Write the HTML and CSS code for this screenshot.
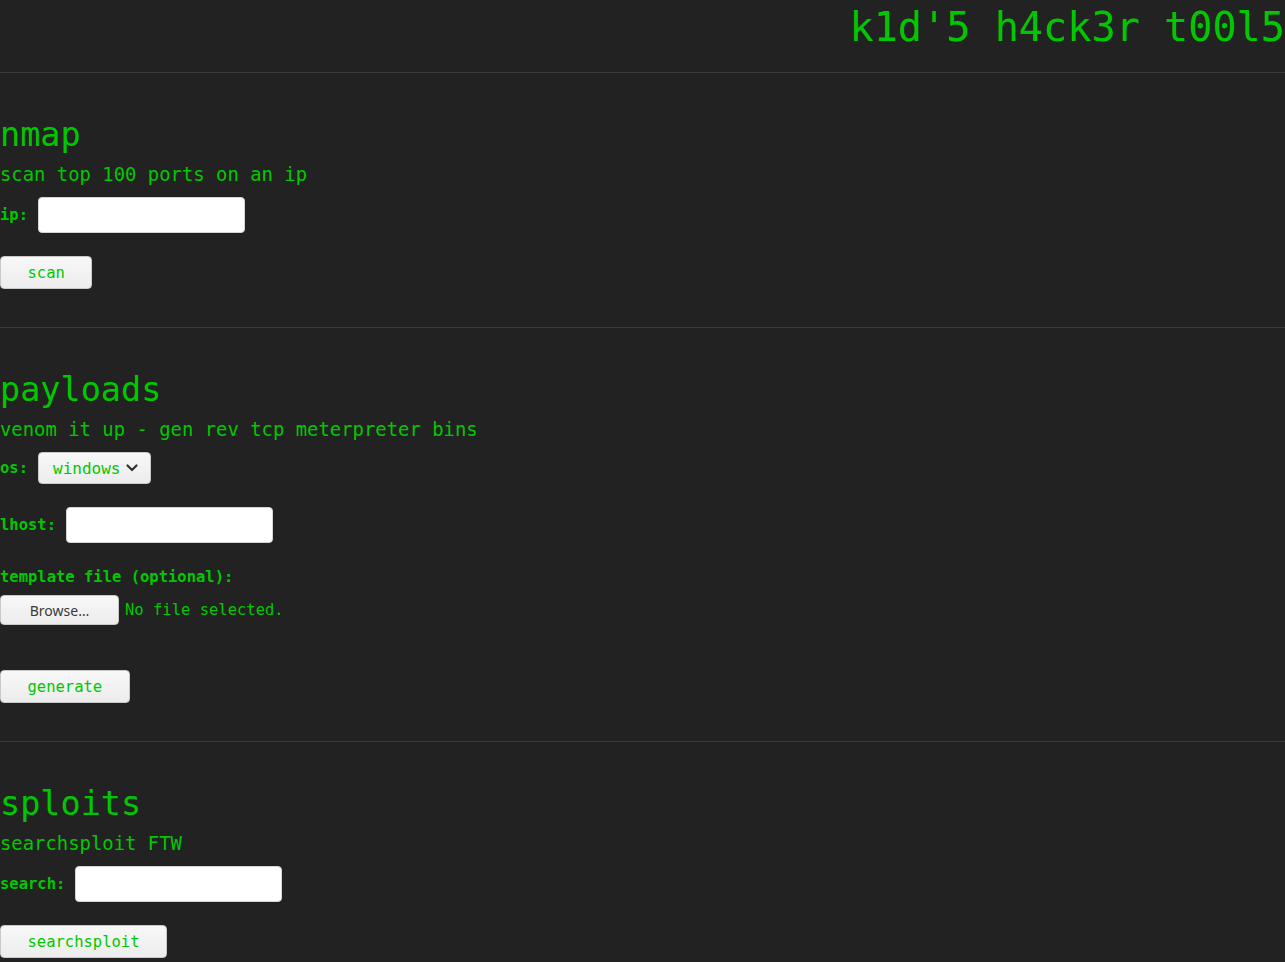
FILE: index.html
```html
<!DOCTYPE html>
<html lang="en">
<head>
    <meta charset="UTF-8">
    <meta name="viewport" content="width=device-width, initial-scale=1.0">
    <title>k1d'5 h4ck3r t00l5</title>
    <link rel="stylesheet" href="styles.css">
</head>
<body>
    <header class="top">
        <h1>k1d'5 h4ck3r t00l5</h1>
    </header>

    <section class="tool">
        <h2>nmap</h2>
        <p class="desc">scan top 100 ports on an ip</p>
        <div class="field">
            <label for="ip">ip:</label>
            <input type="text" id="ip" class="text-in">
        </div>
        <button class="btn">scan</button>
    </section>

    <section class="tool">
        <h2>payloads</h2>
        <p class="desc">venom it up - gen rev tcp meterpreter bins</p>
        <div class="field">
            <label for="os">os:</label>
            <div class="select">
                <span>windows</span>
                <svg width="12" height="8" viewBox="0 0 12 8"><path d="M1.5 1.5 L6 6 L10.5 1.5" fill="none" stroke="#333" stroke-width="2.2" stroke-linecap="round" stroke-linejoin="round"/></svg>
            </div>
        </div>
        <div class="field">
            <label for="lhost">lhost:</label>
            <input type="text" id="lhost" class="text-in">
        </div>
        <div class="field stack">
            <label>template file (optional):</label>
            <div class="file-row">
                <span class="browse">Browse…</span>
                <span class="no-file">No file selected.</span>
            </div>
        </div>
        <button class="btn">generate</button>
    </section>

    <section class="tool last">
        <h2>sploits</h2>
        <p class="desc">searchsploit FTW</p>
        <div class="field">
            <label for="search">search:</label>
            <input type="text" id="search" class="text-in">
        </div>
        <button class="btn">searchsploit</button>
    </section>
</body>
</html>
```

FILE: styles.css
```css
body{
    margin: 0;
    background-color: #222222;
    color: #00c800;
    font-family: "DejaVu Sans Mono", monospace;
}
.top{
    padding: 4px 0 21px;
    border-bottom: 1px solid #3a3a3a;
}
h1{
    margin: 0;
    font-size: 40.2px;
    line-height: 47px;
    font-weight: normal;
    text-align: right;
}
.tool{
    padding: 42px 0 38px;
    border-bottom: 1px solid #3a3a3a;
}
.tool.last{
    border-bottom: none;
    padding-bottom: 0;
}
h2{
    margin: 0 0 8px;
    font-size: 33.5px;
    line-height: 40px;
    font-weight: normal;
}
.desc{
    margin: 0 0 12px;
    font-size: 18.9px;
    line-height: 22px;
}
.field{
    display: flex;
    align-items: center;
    gap: 10px;
    margin-bottom: 23px;
}
.field.stack{
    flex-direction: column;
    align-items: flex-start;
    gap: 9px;
    margin-top: 25px;
    margin-bottom: 45px;
}
label{
    font-size: 15.5px;
    line-height: 18px;
    font-weight: bold;
}
.text-in{
    box-sizing: border-box;
    width: 207px;
    height: 36px;
    margin: 0;
    border: 1px solid #d4d4d4;
    border-radius: 4px;
    background: #ffffff;
}
.select{
    box-sizing: border-box;
    width: 113px;
    height: 32px;
    padding: 0 12px 0 14px;
    display: flex;
    align-items: center;
    justify-content: space-between;
    border: 1px solid #c9c9c9;
    border-radius: 4px;
    background: linear-gradient(#f8f8f8, #ececec);
    font-size: 16px;
}
.file-row{
    display: flex;
    align-items: center;
    gap: 6px;
}
.browse{
    box-sizing: border-box;
    width: 119px;
    height: 30px;
    display: flex;
    align-items: center;
    justify-content: center;
    border: 1px solid #c9c9c9;
    border-radius: 4px;
    background: linear-gradient(#f8f8f8, #ececec);
    color: #3a3a3a;
    font-family: "Noto Sans", "Open Sans", sans-serif;
    font-size: 14px;
}
.no-file{
    font-size: 15.5px;
}
.btn{
    display: block;
    box-sizing: border-box;
    height: 33px;
    padding: 0 26.5px;
    border: 1px solid #c9c9c9;
    border-radius: 4px;
    background: linear-gradient(#f8f8f8, #ececec);
    color: #00c800;
    font-family: "DejaVu Sans Mono", monospace;
    font-size: 15.5px;
    cursor: pointer;
}
```
